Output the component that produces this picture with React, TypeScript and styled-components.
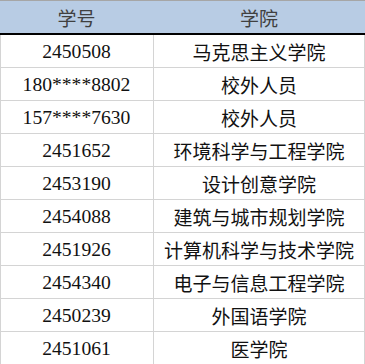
import React from "react";
import styled, { createGlobalStyle } from "styled-components";

const GlobalStyle = createGlobalStyle`
  html, body {
    margin: 0;
    padding: 0;
    background: #ffffff;
  }
`;

type Row = {
  id: string;
  college: string;
};

const rows: Row[] = [
  { id: "2450508", college: "马克思主义学院" },
  { id: "180****8802", college: "校外人员" },
  { id: "157****7630", college: "校外人员" },
  { id: "2451652", college: "环境科学与工程学院" },
  { id: "2453190", college: "设计创意学院" },
  { id: "2454088", college: "建筑与城市规划学院" },
  { id: "2451926", college: "计算机科学与技术学院" },
  { id: "2454340", college: "电子与信息工程学院" },
  { id: "2450239", college: "外国语学院" },
  { id: "2451061", college: "医学院" },
];

const Sheet = styled.div`
  width: 365px;
  height: 364px;
  overflow: hidden;
  border-top: 1px solid #a6a6a6;
  box-sizing: border-box;
  font-family: "Liberation Serif", "Noto Sans CJK SC", serif;
  color: #111111;
`;

const HeaderRow = styled.div`
  display: grid;
  grid-template-columns: 153px 1fr;
  height: 32px;
  background: #b8cce4;
  border-bottom: 2px solid #000000;
`;

const HeaderCell = styled.div`
  display: flex;
  align-items: center;
  justify-content: center;
  font-size: 19px;
  color: #404040;
  padding-top: 1px;
`;

const BodyRow = styled.div`
  display: grid;
  grid-template-columns: 153px 1fr;
  height: 33px;
  box-sizing: border-box;
  border-bottom: 1px solid #d4d4d4;
  border-left: 1px solid #d4d4d4;
  width: 365px;
`;

const Cell = styled.div`
  display: flex;
  align-items: center;
  justify-content: center;
  font-size: 19px;
  border-right: 1px solid #d4d4d4;
  padding-top: 1px;
  white-space: nowrap;
`;

const IdCell = styled(Cell)`
  font-size: 19.6px;
  padding-right: 1px;
`;

export default function App() {
  return (
    <>
      <GlobalStyle />
      <Sheet>
        <HeaderRow>
          <HeaderCell>学号</HeaderCell>
          <HeaderCell>学院</HeaderCell>
        </HeaderRow>
        {rows.map((r) => (
          <BodyRow key={r.id + r.college}>
            <IdCell>{r.id}</IdCell>
            <Cell>{r.college}</Cell>
          </BodyRow>
        ))}
      </Sheet>
    </>
  );
}
